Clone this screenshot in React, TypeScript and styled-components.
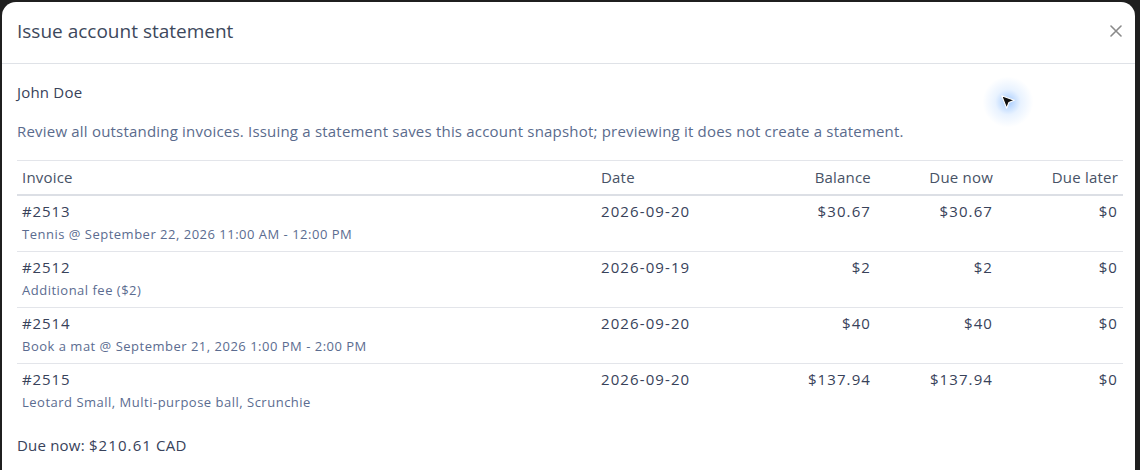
import React from 'react';
import styled, { createGlobalStyle } from 'styled-components';

const GlobalStyle = createGlobalStyle`
  html, body {
    margin: 0;
    padding: 0;
    background: #1f1f1f;
    height: 100%;
    overflow: hidden;
  }
  body {
    font-family: "Open Sans", "Noto Sans", sans-serif;
    letter-spacing: 0.2px;
  }
`;

const Backdrop = styled.div`
  position: relative;
  height: 470px;
  padding: 2px 5px 0 2px;
  box-sizing: border-box;
`;

const Modal = styled.div`
  background: #ffffff;
  border-radius: 14px 14px 0 0;
  height: 100%;
  overflow: hidden;
`;

const Header = styled.div`
  display: flex;
  align-items: center;
  justify-content: space-between;
  height: 58px;
  padding: 0 9px 3px 15px;
  border-bottom: 1px solid #dfe2e7;
`;

const Title = styled.h2`
  margin: 0;
  font-size: 19px;
  font-weight: 400;
  letter-spacing: 0;
  color: #3d485c;
`;

const CloseButton = styled.button`
  border: 0;
  background: none;
  padding: 4px;
  display: flex;
  cursor: pointer;
`;

const Body = styled.div`
  padding: 18px 12px 0 15px;
`;

const Customer = styled.div`
  font-size: 15px;
  line-height: 20px;
  color: #38425a;
`;

const Note = styled.p`
  margin: 19px 0 19px;
  font-size: 15px;
  line-height: 20px;
  color: #5a6b8d;
`;

const Table = styled.div`
  border-top: 1px solid #e3e5ea;
`;

const Row = styled.div<{ $head?: boolean; $last?: boolean }>`
  display: grid;
  grid-template-columns: 1fr 160px 120px 122px 125px;
  border-bottom: ${({ $head, $last }) =>
    $last ? 'none' : $head ? '2px solid #dcdfe5' : '1px solid #e3e5ea'};
`;

const Cell = styled.div<{ $right?: boolean; $head?: boolean; $num?: boolean }>`
  padding: ${({ $head }) => ($head ? '6px 5px 7px' : '5px 5px 8px')};
  text-align: ${({ $right }) => ($right ? 'right' : 'left')};
  font-size: 15px;
  line-height: 20px;
  letter-spacing: ${({ $num }) => ($num ? '1.1px' : '0.2px')};
  color: ${({ $head }) => ($head ? '#475266' : '#38425a')};
`;

const InvoiceNo = styled.div`
  letter-spacing: 0.9px;
`;

const SubText = styled.div`
  margin-top: 4px;
  font-size: 13px;
  line-height: 18px;
  letter-spacing: 0.5px;
  color: #5b6c90;
`;

const Total = styled.div`
  margin-top: 16px;
  font-size: 15px;
  line-height: 20px;
  color: #38425a;
`;

const Amount = styled.span`
  letter-spacing: 1.1px;
`;

const Pointer = styled.div`
  position: absolute;
  left: 978px;
  top: 72px;
  width: 60px;
  height: 60px;
  border-radius: 50%;
  background: radial-gradient(circle, rgba(90, 160, 255, 0.55) 0%, rgba(130, 185, 255, 0.18) 30%, rgba(255, 255, 255, 0) 60%);
  display: flex;
  align-items: center;
  justify-content: center;
  pointer-events: none;
`;

interface Invoice {
  id: string;
  detail: string;
  date: string;
  balance: string;
  dueNow: string;
  dueLater: string;
}

const invoices: Invoice[] = [
  { id: '#2513', detail: 'Tennis @ September 22, 2026 11:00 AM - 12:00 PM', date: '2026-09-20', balance: '$30.67', dueNow: '$30.67', dueLater: '$0' },
  { id: '#2512', detail: 'Additional fee ($2)', date: '2026-09-19', balance: '$2', dueNow: '$2', dueLater: '$0' },
  { id: '#2514', detail: 'Book a mat @ September 21, 2026 1:00 PM - 2:00 PM', date: '2026-09-20', balance: '$40', dueNow: '$40', dueLater: '$0' },
  { id: '#2515', detail: 'Leotard Small, Multi-purpose ball, Scrunchie', date: '2026-09-20', balance: '$137.94', dueNow: '$137.94', dueLater: '$0' },
];

const App = () => {
  return (
    <>
      <GlobalStyle />
      <Backdrop>
        <Modal>
          <Header>
            <Title>Issue account statement</Title>
            <CloseButton aria-label="Close">
              <svg width="12" height="12" viewBox="0 0 12 12">
                <path d="M1 1 L11 11 M11 1 L1 11" stroke="#8a8a8a" strokeWidth="1.6" strokeLinecap="round" />
              </svg>
            </CloseButton>
          </Header>
          <Body>
            <Customer>John Doe</Customer>
            <Note>
              Review all outstanding invoices. Issuing a statement saves this account snapshot; previewing it does not create a statement.
            </Note>
            <Table>
              <Row $head>
                <Cell $head>Invoice</Cell>
                <Cell $head>Date</Cell>
                <Cell $head $right>Balance</Cell>
                <Cell $head $right>Due now</Cell>
                <Cell $head $right>Due later</Cell>
              </Row>
              {invoices.map((inv, i) => (
                <Row key={inv.id} $last={i === invoices.length - 1}>
                  <Cell>
                    <InvoiceNo>{inv.id}</InvoiceNo>
                    <SubText>{inv.detail}</SubText>
                  </Cell>
                  <Cell $num>{inv.date}</Cell>
                  <Cell $num $right>{inv.balance}</Cell>
                  <Cell $num $right>{inv.dueNow}</Cell>
                  <Cell $num $right>{inv.dueLater}</Cell>
                </Row>
              ))}
            </Table>
            <Total>
              Due now: <Amount>$210.61</Amount> CAD
            </Total>
          </Body>
        </Modal>
        <Pointer>
          <svg width="18" height="18" viewBox="0 0 20 20">
            <path d="M3 3 L17 8 L11 10.5 L8.5 17 Z" fill="#111" stroke="#fff" strokeWidth="1.2" strokeLinejoin="round" />
          </svg>
        </Pointer>
      </Backdrop>
    </>
  );
};

export default App;
